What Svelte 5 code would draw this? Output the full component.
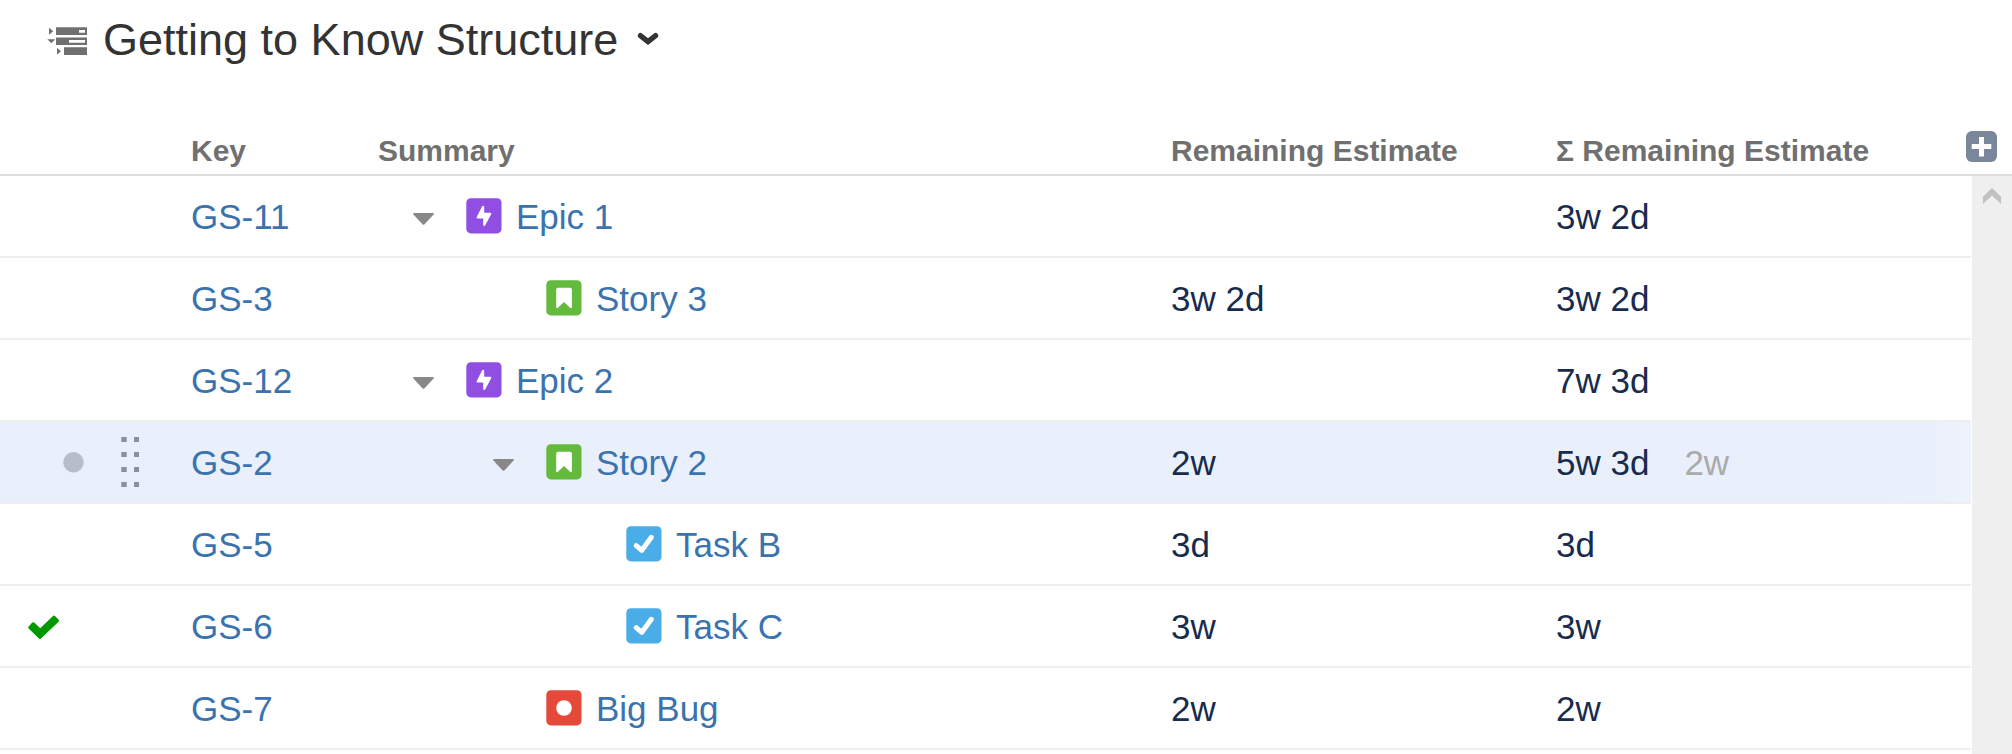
<script>
  const rows = [
    { key: 'GS-11', type: 'epic', name: 'Epic 1', level: 0, open: true, est: '', sum: '3w 2d' },
    { key: 'GS-3', type: 'story', name: 'Story 3', level: 1, est: '3w 2d', sum: '3w 2d' },
    { key: 'GS-12', type: 'epic', name: 'Epic 2', level: 0, open: true, est: '', sum: '7w 3d' },
    { key: 'GS-2', type: 'story', name: 'Story 2', level: 1, open: true, est: '2w', sum: '5w 3d', own: '2w', selected: true },
    { key: 'GS-5', type: 'task', name: 'Task B', level: 2, est: '3d', sum: '3d' },
    { key: 'GS-6', type: 'task', name: 'Task C', level: 2, est: '3w', sum: '3w', done: true },
    { key: 'GS-7', type: 'bug', name: 'Big Bug', level: 1, est: '2w', sum: '2w' }
  ];
  const colors = { epic: '#904ee2', story: '#63ba3c', task: '#4bade8', bug: '#e5493a' };
</script>

<main>
  <header>
    <svg class="logo" width="40" height="28" viewBox="0 0 40 28">
      <g fill="#707070">
        <path fill-rule="evenodd" d="M9 .3h31V8H9zM32 3v2.7h6V3zM9 10.5h31V18H9zM22 13v2.7h16V13zM17 20.3h23V28H17z" />
        <path d="M2 .8l4.3 3.5L2 7.8zM.3 12.3h8L4.3 16.3zM10 20.8l4 3.5-4 3.5z" />
      </g>
    </svg>
    <h1>Getting to Know Structure</h1>
    <svg class="chevron" width="22" height="14" viewBox="0 0 22 14">
      <path d="M3.4 3.6l7.6 6 7.6-6" fill="none" stroke="#333" stroke-width="5.2" stroke-linecap="round" />
    </svg>
  </header>

  <div class="grid head">
    <span></span>
    <span>Key</span>
    <span>Summary</span>
    <span>Remaining Estimate</span>
    <span>Σ Remaining Estimate</span>
    <svg class="add" width="31" height="31" viewBox="0 0 31 31">
      <rect width="31" height="31" rx="6" fill="#7a869a" />
      <path d="M15.5 6v19.5M5.7 15.5h19.6" stroke="#fff" stroke-width="5" stroke-linecap="butt" />
    </svg>
  </div>

  <div class="body">
    <div class="rows">
      {#each rows as r}
        <div class="grid row" class:selected={r.selected}>
          <div class="tools">
            {#if r.done}
              <svg class="done" width="32" height="25" viewBox="0 0 32 25">
                <path d="M.5 11.7L4.2 7.6Q5.2 6.8 6.2 7.6L12.2 13.3 25 1Q26 .2 27 1L30.7 4.8Q31.4 5.8 30.6 6.8L13 23.6Q12 24.4 11 23.6L.6 13.6Q-.2 12.7 .5 11.7z" fill="#090" />
              </svg>
            {/if}
            {#if r.selected}
              <svg class="handle" width="77" height="51" viewBox="0 0 77 51">
                <circle cx="10.5" cy="25.2" r="10.3" fill="#b8bec9" />
                {#each [0, 15, 30, 45] as y}
                  <rect x="58.3" y={y} width="5.4" height="5" fill="#8b909e" />
                  <rect x="71" y={y} width="5" height="5" fill="#8b909e" />
                {/each}
              </svg>
            {/if}
          </div>
          <span class="key">{r.key}</span>
          <div class="summary" style="padding-left: {r.level * 80 + 35}px">
            <span class="caret">
              {#if r.open}
                <svg width="21" height="12" viewBox="0 0 21 12">
                  <path d="M.8 0h19.4q1.2.6.4 1.6L11.3 11.4q-.8.8-1.6 0L.4 1.6Q-.4.6.8 0z" fill="#888" />
                </svg>
              {/if}
            </span>
            <svg class="type" width="36" height="36" viewBox="0 0 36 36">
              <rect x=".3" y=".2" width="35.2" height="35.2" rx="4.5" fill={colors[r.type]} />
              {#if r.type === 'epic'}
                <path d="M16 8.4l-5.4 10.8q-.3 1.3 1 1.3h5.6v6.8q.8 1.2 1.9.1l6.1-11.2q.3-1.4-1-1.4h-6V8.4q-1-1.2-2.2 0z" fill="#fff" />
              {:else if r.type === 'story'}
                <path d="M12.2 7.8h11.7q2 0 2 2v17.5q-.4 1.4-1.6.6L18 22l-6.3 5.9q-1.2.8-1.5-.6V9.8q0-2 2-2z" fill="#fff" />
              {:else if r.type === 'task'}
                <path d="M10.2 19.6l5.6 4.8 9.5-13.1" fill="none" stroke="#fff" stroke-width="5" stroke-linecap="round" stroke-linejoin="round" />
              {:else}
                <circle cx="18" cy="18" r="7.8" fill="#fff" />
              {/if}
            </svg>
            <span class="name">{r.name}</span>
          </div>
          <span>{r.est}</span>
          <span>{r.sum}{#if r.own}<span class="own">{r.own}</span>{/if}</span>
        </div>
      {/each}
    </div>
    <div class="scroll">
      <svg width="18" height="16" viewBox="0 0 18 16">
        <path d="M9 0l9 8.7V16L9 7.6 0 16V8.7z" fill="#c1c1c1" />
      </svg>
    </div>
  </div>
</main>

<style>
  :global(body) {
    background: #fff;
    overflow: hidden;
  }
  main {
    height: 754px;
    display: flex;
    flex-direction: column;
    font-family: 'Liberation Sans', Arial, sans-serif;
    color: #172b4d;
  }
  svg {
    display: block;
    flex: none;
  }
  header {
    height: 120px;
    flex: none;
    display: flex;
    align-items: flex-start;
    padding-left: 47px;
    box-sizing: border-box;
  }
  .logo {
    margin-top: 27px;
  }
  h1 {
    margin: 14px 0 0 16px;
    font-size: 45px;
    line-height: 52px;
    font-weight: 400;
    color: #333;
    white-space: nowrap;
    width: 520px;
  }
  .chevron {
    margin: 32px 0 0 14px;
  }
  .grid {
    display: grid;
    grid-template-columns: 191px 187px 793px 385px 1fr;
    white-space: nowrap;
  }
  .head {
    grid-template-columns: 191px 187px 793px 385px 1fr 46px;
    height: 56px;
    flex: none;
    box-sizing: border-box;
    border-bottom: 2px solid #ddd;
    font-size: 30px;
    font-weight: 700;
    line-height: 34px;
    padding-top: 14px;
    color: #707070;
  }
  .add {
    margin-top: -3px;
  }
  .body {
    flex: 1;
    display: flex;
    min-height: 0;
  }
  .rows {
    flex: 1;
    margin-right: 1px;
  }
  .row {
    height: 80px;
    border-bottom: 2px solid #eee;
    font-size: 35px;
    line-height: 81px;
  }
  .selected {
    background: linear-gradient(90deg, #e9effb, #e9f0fc 96%, #edf2fc);
    background-clip: padding-box;
  }
  .done {
    margin: 29px 0 0 28px;
  }
  .handle {
    margin: 15px 0 0 63px;
  }
  .key,
  .name {
    color: #3b73af;
  }
  .summary {
    display: flex;
    align-items: flex-start;
  }
  .caret {
    width: 53px;
    padding-top: 37px;
  }
  .type {
    margin: 22px 14px 0 0;
  }
  .own {
    margin-left: 35px;
    color: #aaa;
  }
  .scroll {
    width: 40px;
    flex: none;
    background: #efefef;
    display: flex;
    justify-content: center;
    padding-top: 12px;
    box-sizing: border-box;
  }
</style>
